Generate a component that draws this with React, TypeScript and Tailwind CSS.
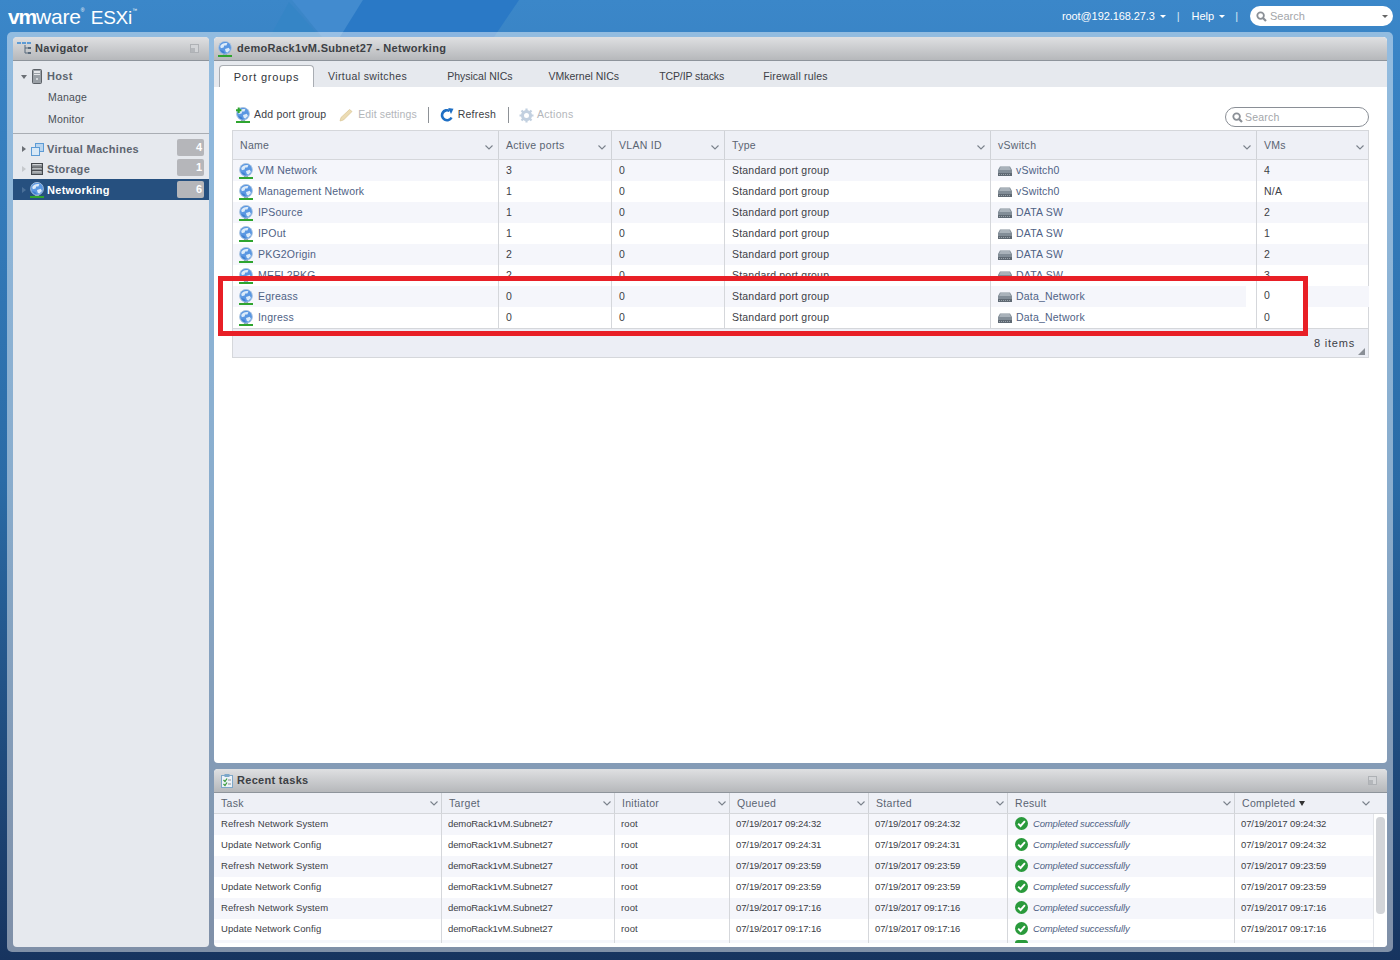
import React from "react";

const font = { fontFamily: '"Liberation Sans", Arial, sans-serif' };

function Globe({ plus = false }: { plus?: boolean }) {
  return (
    <svg width="16" height="16" viewBox="0 0 16 16" className="shrink-0">
      <rect x="1" y="14" width="14" height="2" fill="#2fa52f" />
      <rect x="6" y="12.5" width="4" height="1.5" fill="#8b98a3" />
      <circle cx="8" cy="6.8" r="6.4" fill="#5a97e2" stroke="#a9c3df" strokeWidth="0.9" />
      <path d="M3.2 5 C4.6 2.6 7.6 1.4 10.4 2.2 L9.4 4.4 L7.2 4.4 L6.6 6.6 L3.8 7.2 Z" fill="#dcebf9" />
      <path d="M8 8 L11.8 6.8 L13 9 L10.2 11.8 L8.6 10.6 Z" fill="#dcebf9" />
      <path d="M3 9 C4 11 6 12.4 8 12.4 L6.4 10 Z" fill="#3f7fd0" />
      {plus && <path d="M1 3.2 H6.4 M3.7 0.5 V5.9" stroke="#2fa52f" strokeWidth="2" />}
    </svg>
  );
}

function SwitchIcon() {
  return (
    <svg width="14" height="10" viewBox="0 0 14 10" className="shrink-0">
      <path d="M2 0.5 H12 L14 4 V10 H0 V4 Z" fill="#828d97" />
      <rect x="0" y="7" width="14" height="3" fill="#5f6973" />
      <path d="M1 8.5 H13" stroke="#aab2b9" strokeWidth="0.8" strokeDasharray="1 1" />
      <path d="M2.5 1 H11.5 L12.8 4 H1.2 Z" fill="#a9b2ba" />
    </svg>
  );
}

function Chevron({ className = "" }: { className?: string }) {
  return (
    <svg width="8" height="5" viewBox="0 0 8 5" className={"shrink-0 " + className}>
      <path d="M0.5 0.5 L4 4 L7.5 0.5" fill="none" stroke="#7b828c" strokeWidth="1.1" />
    </svg>
  );
}

function Tick() {
  return (
    <svg width="13" height="13" viewBox="0 0 13 13" className="shrink-0 -mt-[2px]">
      <circle cx="6.5" cy="6.5" r="6.5" fill="#2a9a3c" />
      <path d="M3.2 6.6 L5.6 9 L9.9 4.1" fill="none" stroke="#fff" strokeWidth="1.9" />
    </svg>
  );
}

function Caret() {
  return <span className="inline-block w-0 h-0 border-x-[3px] border-x-transparent border-t-[3px] border-t-white" />;
}

function SearchGlass({ color = "#8a8f96" }: { color?: string }) {
  return (
    <svg width="11" height="11" viewBox="0 0 11 11" className="shrink-0">
      <circle cx="4.6" cy="4.6" r="3.3" fill="none" stroke={color} strokeWidth="1.8" />
      <path d="M7 7 L10 10" stroke={color} strokeWidth="2.2" />
    </svg>
  );
}

function PanelToggle() {
  return (
    <span className="ml-auto w-[9px] h-[9px] bg-[#d2d4d7] border border-[#aeb1b5] flex items-end">
      <span className="w-[4px] h-[4px] bg-[#b4b7bb]" />
    </span>
  );
}

function PanelHeader({ icon, title, toggle, pad }: { icon: React.ReactNode; title: string; toggle?: boolean; pad: string }) {
  return (
    <div className={"h-[24px] shrink-0 flex items-center pr-[10px] bg-gradient-to-b from-[#dfe0e2] to-[#b6b8bb] border-b border-[#8e949b] rounded-t-[4px] " + pad}>
      {icon}
      <span className="text-[11px] font-bold text-[#3c3f44] tracking-[0.3px]">{title}</span>
      {toggle && <PanelToggle />}
    </div>
  );
}

function NavRow({ arrow, icon, label, badge, selected, rowClass, badgeClass }: { arrow: string; icon: React.ReactNode; label: string; badge: string; selected?: boolean; rowClass: string; badgeClass: string }) {
  return (
    <div className={"flex items-center pl-[9px] pr-[5px] " + rowClass + (selected ? " bg-[#26507f]" : "")}>
      <span className={"w-0 h-0 border-y-[3.5px] border-y-transparent border-l-[4px] " + arrow} />
      <span className="ml-[3px] w-[16px] flex justify-center">{icon}</span>
      <span className={"ml-[2px] text-[11px] font-bold tracking-[0.3px] " + (selected ? "text-white" : "text-[#5d6570]")}>{label}</span>
      <span className={"ml-auto w-[27px] h-[17px] rounded-[2px] bg-[#b5b6ba] text-white text-[11px] font-bold text-right pr-[2px] leading-[17px] " + badgeClass}>{badge}</span>
    </div>
  );
}

const rows = [
  ["VM Network", "3", "0", "vSwitch0", "4"],
  ["Management Network", "1", "0", "vSwitch0", "N/A"],
  ["IPSource", "1", "0", "DATA SW", "2"],
  ["IPOut", "1", "0", "DATA SW", "1"],
  ["PKG2Origin", "2", "0", "DATA SW", "2"],
  ["MEFL2PKG", "2", "0", "DATA SW", "3"],
  ["Egreass", "0", "0", "Data_Network", "0"],
  ["Ingress", "0", "0", "Data_Network", "0"],
];

const tasks = [
  ["Refresh Network System", "07/19/2017 09:24:32", "07/19/2017 09:24:32", "07/19/2017 09:24:32"],
  ["Update Network Config", "07/19/2017 09:24:31", "07/19/2017 09:24:31", "07/19/2017 09:24:32"],
  ["Refresh Network System", "07/19/2017 09:23:59", "07/19/2017 09:23:59", "07/19/2017 09:23:59"],
  ["Update Network Config", "07/19/2017 09:23:59", "07/19/2017 09:23:59", "07/19/2017 09:23:59"],
  ["Refresh Network System", "07/19/2017 09:17:16", "07/19/2017 09:17:16", "07/19/2017 09:17:16"],
  ["Update Network Config", "07/19/2017 09:17:16", "07/19/2017 09:17:16", "07/19/2017 09:17:16"],
];

const mainCols = "grid grid-cols-[266px_113px_113px_266px_266px_112px]";
const taskCols = "grid grid-cols-[228px_173px_115px_139px_139px_227px_139px]";

export default function App() {
  return (
    <div style={font} className="relative w-[1400px] h-[960px] overflow-hidden flex flex-col bg-gradient-to-b from-[#3b87c9] via-[#2a6ba6] to-[#17345f]">
      <svg width="1400" height="37" viewBox="0 0 1400 37" className="absolute left-0 top-0">
        <path d="M292 0 H363 L340 37 H322 Z" fill="#428bcf" />
        <path d="M289 2 L270 37 H320 Z" fill="#3585c6" />
        <path d="M363 0 H519 L494 37 H340 Z" fill="#2a79c6" />
      </svg>
      <header className="relative h-[32px] shrink-0 flex items-center">
        <div className="ml-[8px] flex items-baseline text-white leading-none">
          <span className="text-[21px] font-bold tracking-[-1.2px]">vm</span>
          <span className="text-[21px] tracking-[-0.2px]">ware</span>
          <span className="self-start mt-[2px] text-[5px] w-[3px]">®</span>
          <span className="ml-[7px] text-[19px] tracking-[-0.2px]">ESXi</span>
          <span className="self-start mt-[2px] text-[5px]">™</span>
        </div>
        <div className="ml-auto flex items-center text-white text-[11px]">
          <span className="tracking-[-0.1px]">root@192.168.27.3</span>
          <span className="ml-[5px] flex"><Caret /></span>
          <span className="ml-[11px] text-[#dbe9f5]">|</span>
          <span className="ml-[12px]">Help</span>
          <span className="ml-[5px] flex"><Caret /></span>
          <span className="ml-[10px] text-[#dbe9f5]">|</span>
          <div className="ml-[12px] mr-[7px] w-[143px] h-[20px] rounded-full bg-white flex items-center pl-[6px] pr-[5px]">
            <SearchGlass />
            <span className="ml-[3px] text-[#a3a6aa]">Search</span>
            <span className="ml-auto w-0 h-0 border-x-[3px] border-x-transparent border-t-[3px] border-t-[#666]" />
          </div>
        </div>
      </header>

      <main className="relative flex-1 min-h-0 mx-[7px] mb-[8px] py-[5px] px-[6px] flex gap-[5px] rounded-[5px] bg-white/45">
        <aside className="w-[196px] shrink-0 flex flex-col bg-[#e6e9ee] rounded-[4px] overflow-hidden">
          <PanelHeader
            title="Navigator"
            toggle
            pad="pl-[4px] gap-[3px]"
            icon={
              <svg width="15" height="15" viewBox="0 0 15 15" className="shrink-0 -mt-[1px]">
                <rect x="0" y="1" width="4" height="2" fill="#5d9bd5" />
                <rect x="5" y="1" width="4" height="2" fill="#5d9bd5" />
                <rect x="10" y="1" width="4" height="2" fill="#5d9bd5" />
                <path d="M8 4 V12 M8 7 H11 M8 12 H11" stroke="#56687a" fill="none" />
                <rect x="11" y="6" width="3" height="2" fill="#56687a" />
                <rect x="11" y="11" width="3" height="2" fill="#56687a" />
              </svg>
            }
          />
          <div className="h-[73px] border-b border-[#a9adb3] pt-[5px] shrink-0">
            <div className="h-[21px] flex items-center pl-[8px]">
              <span className="w-0 h-0 border-x-[3.5px] border-x-transparent border-t-[4px] border-t-[#6b6f75]" />
              <svg width="10" height="15" viewBox="0 0 10 15" className="ml-[5px]">
                <rect x="0.5" y="0.5" width="9" height="14" rx="1" fill="#9aa0a6" stroke="#5c6167" />
                <rect x="2" y="2" width="6" height="2" fill="#e5e7ea" />
                <rect x="2" y="5" width="6" height="1" fill="#e5e7ea" />
                <circle cx="5" cy="10" r="1" fill="#e5e7ea" />
              </svg>
              <span className="ml-[5px] text-[11px] font-bold tracking-[0.3px] text-[#5d6570]">Host</span>
            </div>
            <div className="h-[21px] flex items-center pl-[35px] text-[10.5px] text-[#4a4f56] tracking-[0.2px]">Manage</div>
            <div className="h-[23px] flex items-center pl-[35px] text-[10.5px] text-[#4a4f56] tracking-[0.2px]">Monitor</div>
          </div>
          <div className="pt-[4px]">
            <NavRow
              arrow="border-l-[#6b6f75]"
              label="Virtual Machines"
              badge="4"
              rowClass="h-[21px] pt-[1px]"
              badgeClass="-mt-[3px]"
              icon={
                <svg width="13" height="13" viewBox="0 0 13 13">
                  <rect x="4.5" y="0.5" width="8" height="8" fill="#b9d5ef" stroke="#5d9bd5" />
                  <rect x="0.5" y="4.5" width="8" height="8" fill="#d8e8f6" stroke="#5d9bd5" />
                </svg>
              }
            />
            <NavRow
              arrow="border-l-[#c6c9cd]"
              label="Storage"
              badge="1"
              rowClass="h-[20px]"
              badgeClass="-mt-[3px]"
              icon={
                <svg width="12" height="12" viewBox="0 0 12 12">
                  <rect x="0.5" y="0.5" width="11" height="11" fill="#8f9499" stroke="#45494e" />
                  <path d="M1 4.3 H11 M1 7.8 H11" stroke="#2f3338" />
                  <path d="M1.5 1.5 H10.5 M1.5 5.2 H10.5 M1.5 8.8 H10.5" stroke="#d0d3d6" />
                </svg>
              }
            />
            <NavRow arrow="border-l-[#4a6f98]" label="Networking" badge="6" selected rowClass="h-[21px] pt-[1px]" badgeClass="-mt-[1px]" icon={<Globe />} />
          </div>
        </aside>

        <section className="flex-1 min-w-0 flex flex-col gap-[6px]">
          <div className="h-[726px] shrink-0 flex flex-col bg-white rounded-[4px] overflow-hidden">
            <PanelHeader title="demoRack1vM.Subnet27 - Networking" pad="pl-[3px] gap-[4px]" icon={<Globe />} />
            <nav className="h-[26px] shrink-0 bg-[#e6e9ee] flex items-end pl-[5px] text-[10.5px] text-[#3c4046]">
              <div className="w-[95px] h-[22px] pt-[1px] bg-white border border-b-0 border-[#a9adb3] rounded-t-[4px] flex items-center justify-center text-[11px] tracking-[0.8px] text-[#30343a]">Port groups</div>
              <div className="h-[22px] pt-[2px] flex items-center ml-[14px] tracking-[0.4px]">Virtual switches</div>
              <div className="h-[22px] pt-[2px] flex items-center ml-[40px]">Physical NICs</div>
              <div className="h-[22px] pt-[2px] flex items-center ml-[36px]">VMkernel NICs</div>
              <div className="h-[22px] pt-[2px] flex items-center ml-[40px] tracking-[-0.1px]">TCP/IP stacks</div>
              <div className="h-[22px] pt-[2px] flex items-center ml-[39px] tracking-[0.2px]">Firewall rules</div>
            </nav>
            <div className="flex-1 min-h-0 px-[18px]">
              <div className="h-[43px] flex items-center text-[10.5px] tracking-[0.2px] text-[#3c4046] pl-[3px] pt-[13px]">
                <Globe plus />
                <span className="ml-[3px]">Add port group</span>
                <svg width="14" height="14" viewBox="0 0 14 14" className="ml-[13px]">
                  <path d="M1 13 L2 9.5 L10.5 1.5 L13 3.5 L4.5 12 Z" fill="#ecdcb4" stroke="#d8c493" strokeWidth="0.7" />
                </svg>
                <span className="ml-[5px] tracking-[0.1px] text-[#b3b6ba]">Edit settings</span>
                <span className="ml-[11px] w-px h-[16px] bg-[#8d9196]" />
                <svg width="14" height="14" viewBox="0 0 14 14" className="ml-[11px]">
                  <path d="M11.5 9.5 A5 5 0 1 1 9.6 2.9" fill="none" stroke="#1f6fc4" strokeWidth="2.6" />
                  <path d="M8.2 0 L13.5 0.8 L11 6 Z" fill="#1f6fc4" />
                </svg>
                <span className="ml-[4px]">Refresh</span>
                <span className="ml-[12px] w-px h-[16px] bg-[#8d9196]" />
                <svg width="15" height="15" viewBox="0 0 15 15" className="ml-[10px]">
                  <circle cx="7.5" cy="7.5" r="4" fill="none" stroke="#c2d0e0" strokeWidth="3" />
                  <path d="M7.5 0.5 V3 M7.5 12 V14.5 M0.5 7.5 H3 M12 7.5 H14.5 M2.5 2.5 L4.3 4.3 M10.7 10.7 L12.5 12.5 M2.5 12.5 L4.3 10.7 M10.7 4.3 L12.5 2.5" stroke="#c2d0e0" strokeWidth="2.2" />
                </svg>
                <span className="ml-[3px] tracking-[0.3px] text-[#b3b6ba]">Actions</span>
                <div className="ml-auto -mb-[4px] w-[144px] h-[20px] pt-[1px] rounded-full bg-white border border-[#8a8f96] flex items-center pl-[6px]">
                  <SearchGlass />
                  <span className="ml-[2px] text-[#a3a6aa]">Search</span>
                </div>
              </div>

              <div className="relative w-[1137px] border border-[#d5d7db]">
                <div className={mainCols + " h-[29px] bg-[#eef0f6] border-b border-[#d5d7db] text-[10.5px] tracking-[0.3px] text-[#5a6472]"}>
                  {["Name", "Active ports", "VLAN ID", "Type", "vSwitch", "VMs"].map((h) => (
                    <div key={h} className="flex items-center justify-between pl-[7px] pr-[5px] pt-[2px] border-r border-[#cfd2d7] last:border-r-0">
                      <span>{h}</span>
                      <Chevron className="mt-[2px]" />
                    </div>
                  ))}
                </div>
                {rows.map((r, i) => (
                  <div key={r[0]} className={mainCols + " h-[21px] text-[10.5px] tracking-[0.2px] text-[#3c4046] " + (i % 2 === 0 ? "bg-[#f5f6fb]" : "bg-white")}>
                    <div className="flex items-center pl-[5px] border-r border-[#d5d7db] text-[#4f6285]">
                      <Globe />
                      <span className="ml-[4px]">{r[0]}</span>
                    </div>
                    <div className="flex items-center pl-[7px] border-r border-[#d5d7db]">{r[1]}</div>
                    <div className="flex items-center pl-[7px] border-r border-[#d5d7db]">{r[2]}</div>
                    <div className="flex items-center pl-[7px] border-r border-[#d5d7db]">Standard port group</div>
                    <div className={"flex items-center pl-[7px] border-r border-[#d5d7db] text-[#4f6285] " + (r[0] === "Egreass" ? "bg-[linear-gradient(to_right,#f5f6fb_255px,#ffffff_255px)]" : "")}>
                      <SwitchIcon />
                      <span className="ml-[4px]">{r[3]}</span>
                    </div>
                    <div className={"flex items-center pl-[7px] " + (r[0] === "Egreass" ? "bg-[linear-gradient(to_right,#ffffff_50px,#f5f6fb_50px)] pb-[2px]" : "")}>{r[4]}</div>
                  </div>
                ))}
                <div className="relative h-[29px] bg-[#eceef5] border-t border-[#d5d7db] flex items-center justify-end pr-[13px] text-[11px] tracking-[0.8px] text-[#3c4046]">
                  8 items
                  <svg width="7" height="7" viewBox="0 0 7 7" className="absolute right-[3px] bottom-[2px]">
                    <path d="M7 0 V7 H0 Z" fill="#8a8f96" />
                  </svg>
                </div>
                <div className="absolute left-[-15px] top-[145px] w-[1090px] h-[60px] border-[5px] border-[#e81f26]" />
              </div>
            </div>
          </div>

          <div className="flex-1 min-h-0 flex flex-col bg-white rounded-[4px] overflow-hidden">
            <div className="h-[24px] shrink-0 flex items-center pl-[7px] pr-[10px] bg-gradient-to-b from-[#dfe0e2] to-[#b6b8bb] border-b border-[#8e949b]">
              <svg width="12" height="14" viewBox="0 0 12 14" className="shrink-0">
                <rect x="0.5" y="1.5" width="11" height="12" fill="#eef3f8" stroke="#7da7c9" />
                <rect x="3.5" y="0" width="5" height="3" fill="#7da7c9" />
                <path d="M2.5 6 L4 7.5 L6 4.5 M2.5 10 L4 11.5 L6 8.5" fill="none" stroke="#3a9a3c" strokeWidth="1.2" />
                <path d="M7 6 H10 M7 10 H10" stroke="#8a9097" />
              </svg>
              <span className="ml-[4px] text-[11px] font-bold text-[#3c3f44] tracking-[0.3px]">Recent tasks</span>
              <PanelToggle />
            </div>
            <div className={taskCols + " h-[21px] shrink-0 bg-[#eef0f6] border-b border-[#d5d7db] text-[10.5px] tracking-[0.3px] text-[#5a6472]"}>
              {["Task", "Target", "Initiator", "Queued", "Started", "Result", "Completed"].map((h) => (
                <div key={h} className="flex items-center justify-between pl-[7px] pr-[3px] pt-[1px] border-r border-[#cfd2d7] last:border-r-0 last:pr-[4px]">
                  <span className="flex items-center">
                    {h}
                    {h === "Completed" && <span className="ml-[4px] w-0 h-0 border-x-[3px] border-x-transparent border-t-[5px] border-t-[#333]" />}
                  </span>
                  <Chevron />
                </div>
              ))}
            </div>
            <div className="relative flex-1 min-h-0 overflow-hidden text-[9.5px] tracking-[0.1px] text-[#3c4046]">
              {tasks.map((t, i) => (
                <div key={i} className={taskCols + " h-[21px] " + (i % 2 === 0 ? "bg-[#f5f6fb]" : "bg-white")}>
                  <div className="flex items-center pl-[7px] border-r border-[#d5d7db]">{t[0]}</div>
                  <div className="flex items-center pl-[6px] border-r border-[#d5d7db] tracking-[-0.1px]">demoRack1vM.Subnet27</div>
                  <div className="flex items-center pl-[6px] border-r border-[#d5d7db]">root</div>
                  <div className="flex items-center pl-[6px] border-r border-[#d5d7db] tracking-[-0.1px]">{t[1]}</div>
                  <div className="flex items-center pl-[6px] border-r border-[#d5d7db] tracking-[-0.1px]">{t[2]}</div>
                  <div className="flex items-center pl-[7px] border-r border-[#d5d7db] italic text-[#4f6285] tracking-[-0.15px]">
                    <Tick />
                    <span className="ml-[5px]">Completed successfully</span>
                  </div>
                  <div className="flex items-center pl-[6px] tracking-[-0.1px]">{t[3]}</div>
                </div>
              ))}
              <div className={taskCols + " h-[3px] bg-[#f5f6fb]"}>
                <div className="border-r border-[#d5d7db]" />
                <div className="border-r border-[#d5d7db]" />
                <div className="border-r border-[#d5d7db]" />
                <div className="border-r border-[#d5d7db]" />
                <div className="border-r border-[#d5d7db]" />
                <div className="border-r border-[#d5d7db] pl-[7px]"><div className="w-[13px] h-[3px] bg-[#2a9a3c] rounded-t-full" /></div>
                <div />
              </div>
              <div className="absolute right-0 top-0 bottom-0 w-[14px] bg-white border-l border-[#e3e5e9]">
                <div className="ml-[2px] mt-[3px] w-[9px] h-[97px] rounded-[4px] bg-[#d3d5d9]" />
              </div>
            </div>
          </div>
        </section>
      </main>
    </div>
  );
}
